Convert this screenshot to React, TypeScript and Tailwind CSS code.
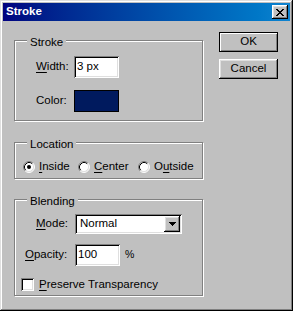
// Photoshop "Stroke" dialog, Windows classic look

import type { ReactNode } from 'react';

const RAISED =
  'shadow-[inset_-1px_-1px_0_#000,inset_1px_1px_0_#fff,inset_-2px_-2px_0_#808080,inset_2px_2px_0_#dfdfdf]';
const SUNKEN =
  'shadow-[inset_1px_1px_0_#808080,inset_-1px_-1px_0_#fff,inset_2px_2px_0_#000,inset_-2px_-2px_0_#dfdfdf]';

function GroupBox({ title, height, children }: { title: string; height: string; children: ReactNode }) {
  return (
    <div className={`w-[189px] ${height} border border-[#808080] shadow-[inset_1px_1px_0_#fff,1px_1px_0_#fff]`}>
      <div className="-mt-[6px] ml-[12px] w-fit px-[3px] bg-[#c0c0c0] leading-[14px]">{title}</div>
      {children}
    </div>
  );
}

function U({ children }: { children: ReactNode }) {
  return <span className="underline underline-offset-[2px]">{children}</span>;
}

function Radio({ checked }: { checked?: boolean }) {
  return (
    <svg width="12" height="12" viewBox="0 0 12 12" className="shrink-0">
      <circle cx="6" cy="6" r="5" fill="#fff" />
      <path d="M2.11 9.89 A5.5 5.5 0 0 1 9.89 2.11" fill="none" stroke="#808080" />
      <path d="M9.89 2.11 A5.5 5.5 0 0 1 2.11 9.89" fill="none" stroke="#fff" />
      <path d="M2.82 9.18 A4.5 4.5 0 0 1 9.18 2.82" fill="none" stroke="#000" />
      <path d="M9.18 2.82 A4.5 4.5 0 0 1 2.82 9.18" fill="none" stroke="#dfdfdf" />
      {checked && <circle cx="6" cy="6" r="2" fill="#000" />}
    </svg>
  );
}

function CloseGlyph() {
  const rows = [
    [0, 1, 6, 7],
    [1, 2, 5, 6],
    [2, 3, 4, 5],
    [3, 4],
    [2, 3, 4, 5],
    [1, 2, 5, 6],
    [0, 1, 6, 7],
  ];
  return (
    <svg width="8" height="7" viewBox="0 0 8 7" shapeRendering="crispEdges">
      {rows.map((xs, y) => xs.map((x) => <rect key={`${x}-${y}`} x={x} y={y} width="1" height="1" fill="#000" />))}
    </svg>
  );
}

export default function App() {
  return (
    <div
      className="w-[293px] h-[311px] p-[3px] bg-[#c0c0c0] text-black text-[11.5px] shadow-[inset_-1px_-1px_0_#000,inset_1px_1px_0_#dfdfdf,inset_-2px_-2px_0_#808080,inset_2px_2px_0_#fff]"
      style={{ fontFamily: '"Liberation Sans", Arial, sans-serif' }}
    >
      {/* Title bar */}
      <div className="h-[18px] flex items-center justify-between bg-linear-to-r from-[#000080] to-[#1084d0]">
        <span className="pl-[3px] text-white font-bold text-[11.5px] leading-none">Stroke</span>
        <div className={`w-[16px] h-[14px] mr-[2px] flex items-center justify-center bg-[#c0c0c0] ${RAISED}`}>
          <CloseGlyph />
        </div>
      </div>

      <div className="flex items-start pl-[11px]">
        {/* Left column: group boxes */}
        <div className="flex flex-col pt-[19px]">
          <GroupBox title="Stroke" height="h-[81px]">
            <div className="flex items-center mt-[7px] ml-[21px]">
              <span className="w-[38px]"><U>W</U>idth:</span>
              <div className={`w-[45px] h-[22px] px-[3px] flex items-center bg-white ${SUNKEN}`}>3 px</div>
            </div>
            <div className="flex items-center mt-[12px] ml-[21px]">
              <span className="w-[38px]">Color:</span>
              <div className="w-[45px] h-[22px] border border-black bg-[#001a5e]" />
            </div>
          </GroupBox>

          <div className="mt-[21px]">
            <GroupBox title="Location" height="h-[37px]">
              <div className="flex items-center h-[14px] mt-[9px] ml-[8px]">
                <div className="w-[55px] flex items-center">
                  <Radio checked />
                  <span className="ml-[4px]"><U>I</U>nside</span>
                </div>
                <div className="w-[60px] flex items-center">
                  <Radio />
                  <span className="ml-[4px]"><U>C</U>enter</span>
                </div>
                <div className="flex items-center">
                  <Radio />
                  <span className="ml-[4px]">O<U>u</U>tside</span>
                </div>
              </div>
            </GroupBox>
          </div>

          <div className="mt-[20px]">
            <GroupBox title="Blending" height="h-[97px]">
              <div className="flex items-center mt-[6px] ml-[21px]">
                <span className="w-[39px]"><U>M</U>ode:</span>
                <div className={`w-[107px] h-[20px] flex items-center justify-between bg-white ${SUNKEN}`}>
                  <span className="pl-[5px]">Normal</span>
                  <div className={`w-[16px] h-[16px] mr-[2px] flex items-center justify-center bg-[#c0c0c0] ${RAISED}`}>
                    <svg width="7" height="4" viewBox="0 0 7 4" shapeRendering="crispEdges">
                      <path d="M0 0h7v1h-1v1h-1v1h-1v1h-1v-1h-1v-1h-1v-1h-1z" fill="#000" />
                    </svg>
                  </div>
                </div>
              </div>
              <div className="flex items-center mt-[10px] ml-[10px]">
                <span className="w-[50px]"><U>O</U>pacity:</span>
                <div className={`w-[45px] h-[22px] px-[3px] flex items-center bg-white ${SUNKEN}`}>100</div>
                <span className="ml-[5px] text-[10.5px]">%</span>
              </div>
              <div className="flex items-center mt-[10px] ml-[6px]">
                <div className={`w-[13px] h-[13px] bg-white ${SUNKEN}`} />
                <span className="ml-[5px]"><U>P</U>reserve Transparency</span>
              </div>
            </GroupBox>
          </div>
        </div>

        {/* Right column: buttons */}
        <div className="flex flex-col gap-[7px] pt-[11px] ml-[16px]">
          <div className="w-[59px] h-[20px] border border-black flex items-center justify-center bg-[#c0c0c0] shadow-[inset_1px_1px_0_#fff,inset_-1px_-1px_0_#808080]">
            OK
          </div>
          <div className={`w-[59px] h-[20px] flex items-center justify-center bg-[#c0c0c0] ${RAISED}`}>
            Cancel
          </div>
        </div>
      </div>
    </div>
  );
}
